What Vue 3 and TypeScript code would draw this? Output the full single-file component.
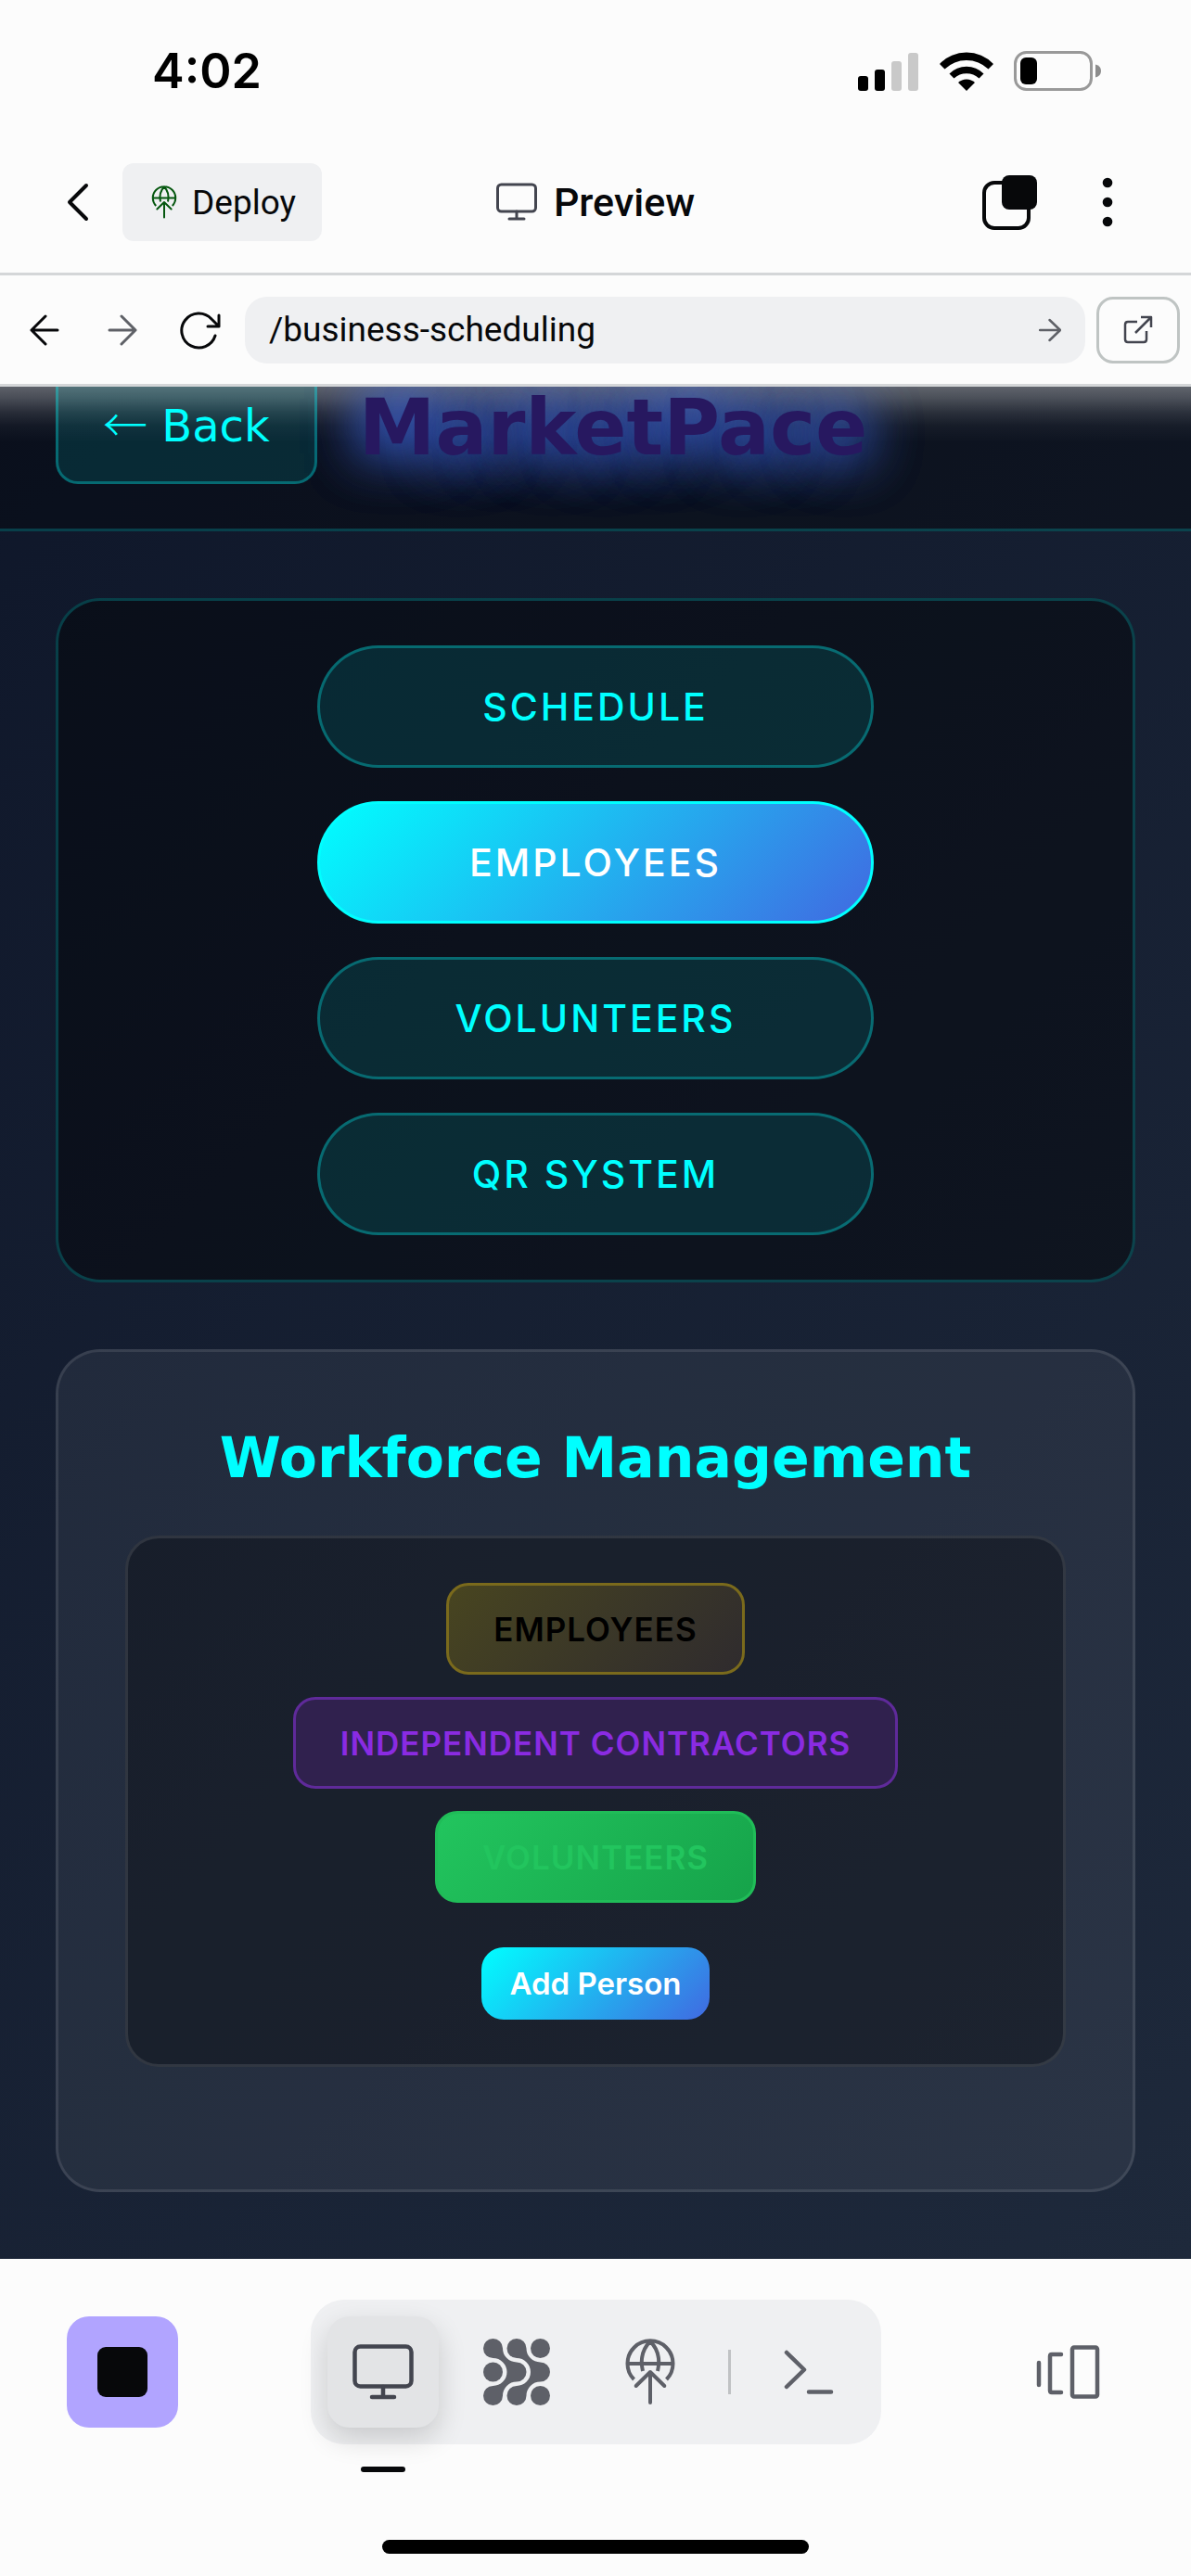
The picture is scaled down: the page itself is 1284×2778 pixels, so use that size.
<script setup lang="ts">
import { ref } from 'vue'

interface Tab {
  id: string
  label: string
}

const sections: Tab[] = [
  { id: 'schedule', label: 'SCHEDULE' },
  { id: 'employees', label: 'EMPLOYEES' },
  { id: 'volunteers', label: 'VOLUNTEERS' },
  { id: 'qr', label: 'QR SYSTEM' },
]
const groups: Tab[] = [
  { id: 'staff', label: 'EMPLOYEES' },
  { id: 'contractors', label: 'INDEPENDENT CONTRACTORS' },
  { id: 'helpers', label: 'VOLUNTEERS' },
]
const activeSection = ref('employees')
const path = ref('/business-scheduling')
</script>

<template>
  <div class="screen">
    <div class="status">
      <span class="time">4:02</span>
      <div class="indicators">
        <svg width="66" height="42" viewBox="0 0 66 42">
          <rect x="0" y="26" width="11" height="16" rx="3" />
          <rect x="18" y="19" width="11" height="23" rx="3" />
          <rect x="36" y="10" width="11" height="32" rx="3" fill="#c9c9c9" />
          <rect x="54" y="1" width="11" height="41" rx="3" fill="#c9c9c9" />
        </svg>
        <svg width="58" height="42" viewBox="0 0 58 42">
          <path d="M0 13A40 40 0 0 1 58 13L52.500 18.500A34 34 0 0 0 5.500 18.500Z" />
          <path d="M10.500 23.500A26 26 0 0 1 47.500 23.500L42.500 28.500A20 20 0 0 0 15.500 28.500Z" />
          <path d="M20 33A13 13 0 0 1 38 33L29 42Z" />
        </svg>
        <svg width="96" height="44" viewBox="0 0 96 44">
          <rect x="1.500" y="1.500" width="82" height="40" rx="12" fill="none" stroke="#999" stroke-width="3" />
          <rect x="7" y="7" width="18" height="29" rx="6" />
          <path d="M88 14.500Q94 16 94 21.500T88 28.500Z" fill="#8c8c8c" />
        </svg>
      </div>
    </div>

    <header class="nav">
      <div class="nav-left">
        <button class="chevron" aria-label="Go back">
          <svg width="24" height="42" viewBox="0 0 24 42"><path d="M21 3L3 21L21 39" fill="none" stroke="#07080a" stroke-width="4" stroke-linecap="round" stroke-linejoin="round" /></svg>
        </button>
        <button class="deploy">
          <svg class="line" width="36" height="36" viewBox="0 0 72 72" stroke="#05570f">
            <path d="M18.500 44A24.500 24.500 0 1 1 53.500 44M11.500 27H60.500M28 35C25 22 28 11 36 3C44 11 47 22 44 35" />
            <path d="M20.700 51L36 36L51.300 51M36 36V69" stroke-linecap="round" stroke-linejoin="round" />
          </svg>
          Deploy
        </button>
      </div>
      <h1 class="title">
        <svg width="44" height="42" viewBox="0 0 44 42" fill="none" stroke="#43454f" stroke-width="3">
          <rect x="1.500" y="2" width="41" height="29" rx="4" /><path d="M22 31V38M14 39H30" stroke-linecap="round" />
        </svg>
        Preview
      </h1>
      <div class="nav-right">
        <button aria-label="Tabs">
          <svg width="60" height="60" viewBox="0 0 60 60">
            <rect x="3" y="9" width="48" height="49" rx="11" fill="none" stroke="#07080a" stroke-width="4" />
            <rect x="22" y="1" width="38" height="37" rx="8" fill="#07080a" />
          </svg>
        </button>
        <button aria-label="More">
          <svg width="12" height="54" viewBox="0 0 12 54" fill="#07080a"><circle cx="6" cy="6" r="5.300" /><circle cx="6" cy="27" r="5.300" /><circle cx="6" cy="48" r="5.300" /></svg>
        </button>
      </div>
    </header>

    <form class="address" @submit.prevent>
      <button type="button" class="step" aria-label="Previous page">
        <svg width="32" height="34" viewBox="0 0 32 34" fill="none" stroke="#07080a" stroke-width="3" stroke-linecap="round" stroke-linejoin="round"><path d="M30 17H2M17 2L2 17L17 32" /></svg>
      </button>
      <button type="button" class="step" aria-label="Next page">
        <svg width="32" height="34" viewBox="0 0 32 34" fill="none" stroke="#5f6167" stroke-width="3" stroke-linecap="round" stroke-linejoin="round"><path d="M2 17H30M15 2L30 17L15 32" /></svg>
      </button>
      <button type="button" class="step" aria-label="Reload">
        <svg width="44" height="42" viewBox="0 0 44 42" fill="none" stroke="#07080a" stroke-width="3" stroke-linecap="round" stroke-linejoin="round"><path d="M38 27A18.500 18.500 0 1 1 34 9L42 17M42 5V17H30" /></svg>
      </button>
      <div class="field">
        <input v-model="path" type="text" aria-label="Page path" />
        <button type="submit" aria-label="Open path">
          <svg width="24" height="26" viewBox="0 0 24 26" fill="none" stroke="#5f6167" stroke-width="2.500" stroke-linecap="round" stroke-linejoin="round"><path d="M1 13H23M11.500 2L23 13L11.500 24" /></svg>
        </button>
      </div>
      <button type="button" class="external" aria-label="Open in new tab">
        <svg width="32" height="32" viewBox="0 0 32 32" fill="none" stroke="#43454f" stroke-width="2.500" stroke-linejoin="round"><path d="M15 7H5Q2 7 2 10V26Q2 29 5 29H22Q25 29 25 26V17M13 19L30 2M19 2H30V13" /></svg>
      </button>
    </form>

    <main class="page">
      <div class="brandbar">
        <button class="back"><span class="arrow">←</span> Back</button>
        <span class="brand">MarketPace</span>
      </div>

      <nav class="card sections">
        <button
          v-for="s in sections"
          :key="s.id"
          class="pill"
          :class="{ active: s.id === activeSection }"
          @click="activeSection = s.id"
        >{{ s.label }}</button>
      </nav>

      <section class="card workforce">
        <h2>Workforce Management</h2>
        <div class="panel">
          <div class="groups">
            <button v-for="g in groups" :key="g.id" class="group" :class="g.id">{{ g.label }}</button>
          </div>
          <button class="add">Add Person</button>
        </div>
      </section>
    </main>

    <footer class="dock">
      <div class="dock-row">
        <button class="stop" aria-label="Stop"><span></span></button>
        <div class="tools">
          <button class="tool current" aria-label="Preview">
            <svg width="66" height="62" viewBox="0 0 66 62" fill="none" stroke="#43454f" stroke-width="4.500">
              <rect x="2.500" y="3.500" width="61" height="43" rx="6" /><path d="M33 47V57M21 58H45" stroke-linecap="round" />
            </svg>
          </button>
          <button class="tool" aria-label="Agent">
            <svg width="72" height="72" viewBox="0 0 72 72" fill="#5e6068">
              <path d="M10.500 0A10.500 10.500 0 0 1 21 10.500A15 15 0 0 0 36 25.500A10.500 10.500 0 0 1 36 46.500A15 15 0 0 0 21 61.500A10.500 10.500 0 1 1 10.500 51A15 15 0 0 0 10.500 21A10.500 10.500 0 1 1 10.500 0Z" />
              <path transform="translate(25.5 0)" d="M10.500 0A10.500 10.500 0 0 1 21 10.500A15 15 0 0 0 36 25.500A10.500 10.500 0 0 1 36 46.500A15 15 0 0 0 21 61.500A10.500 10.500 0 1 1 10.500 51A15 15 0 0 0 10.500 21A10.500 10.500 0 1 1 10.500 0Z" />
              <circle cx="10.500" cy="36" r="10.500" /><circle cx="61.500" cy="10.500" r="10.500" /><circle cx="61.500" cy="61.500" r="10.500" />
            </svg>
          </button>
          <button class="tool" aria-label="Deployments">
            <svg class="line" width="72" height="72" viewBox="0 0 72 72" stroke="#5e6068">
              <path d="M18.500 44A24.500 24.500 0 1 1 53.500 44M11.500 27H60.500M28 35C25 22 28 11 36 3C44 11 47 22 44 35" />
              <path d="M20.700 51L36 36L51.300 51M36 36V69" stroke-linecap="round" stroke-linejoin="round" />
            </svg>
          </button>
          <span class="divider"></span>
          <button class="tool" aria-label="Console">
            <svg width="54" height="50" viewBox="0 0 54 50" fill="none" stroke="#5e6068" stroke-width="4.500" stroke-linecap="round" stroke-linejoin="round"><path d="M3 4L22 22.500L3 41M27 46.500H51" /></svg>
          </button>
        </div>
        <button class="tool" aria-label="Switch tab">
          <svg width="70" height="60" viewBox="0 0 70 60" fill="none" stroke="#5e6068" stroke-width="4.500" stroke-linecap="round" stroke-linejoin="round"><path d="M3 20V44M27 11H17Q15 11 15 13V50Q15 52 17 52H27" /><rect x="39" y="3.500" width="27" height="53" rx="2" /></svg>
        </button>
      </div>
      <div class="home"></div>
    </footer>
  </div>
</template>

<style>
body {
  margin: 0;
}
</style>

<style scoped>
* {
  box-sizing: border-box;
}
.screen {
  min-height: 100vh;
  display: flex;
  flex-direction: column;
  background: #fcfcfc;
  color: #07080a;
  font-family: Roboto, "Open Sans", sans-serif;
}
button {
  margin: 0;
  padding: 0;
  border: 0;
  background: none;
  color: inherit;
  font: inherit;
  cursor: pointer;
}
svg {
  display: block;
  flex: none;
}
.line {
  fill: none;
  stroke-width: 4;
}
.status {
  height: 142px;
  padding: 12px 95px 0 164px;
  display: flex;
  align-items: center;
  justify-content: space-between;
}
.time {
  color: #000;
  font: 600 52px/64px Inter, sans-serif;
}
.indicators {
  display: flex;
  align-items: center;
  gap: 22px;
}
.nav {
  height: 155px;
  padding: 0 60px 0 36px;
  border-bottom: 3px solid #d4d6d8;
  display: grid;
  grid-template-columns: 1fr auto 1fr;
  align-items: center;
}
.nav-left,
.nav-right,
.title {
  display: flex;
  align-items: center;
}
.nav-left {
  margin-right: 24px;
}
.chevron {
  width: 96px;
  height: 84px;
  display: flex;
  align-items: center;
  justify-content: center;
}
.deploy {
  height: 84px;
  padding: 0 28px 0 27px;
  border-radius: 12px;
  background: #eff0f2;
  display: flex;
  align-items: center;
  gap: 12px;
  font-size: 37px;
}
.title {
  margin: 0 0 0 24px;
  gap: 18px;
  font-size: 43px;
  font-weight: 500;
}
.nav-right {
  justify-content: flex-end;
  gap: 46px;
}
.nav-right button {
  width: 60px;
  height: 60px;
  display: flex;
  align-items: center;
  justify-content: center;
}
.address {
  position: relative;
  z-index: 1;
  height: 120px;
  padding: 0 12px 0 6px;
  border-bottom: 3px solid #d4d6d8;
  background: #fcfcfc;
  display: flex;
  align-items: center;
}
.step {
  width: 84px;
  height: 72px;
  display: flex;
  align-items: center;
  justify-content: center;
}
.field {
  flex: 1;
  min-width: 0;
  height: 72px;
  margin: 0 12px 0 6px;
  padding: 0 26px;
  border-radius: 24px;
  background: #eff0f2;
  display: flex;
  align-items: center;
}
.field input {
  flex: 1;
  min-width: 0;
  padding: 0;
  border: 0;
  outline: 0;
  background: none;
  color: inherit;
  font: inherit;
  font-size: 37px;
}
.external {
  width: 90px;
  height: 72px;
  border: 3px solid #bfc4c3;
  border-radius: 18px;
  display: flex;
  align-items: center;
  justify-content: center;
}
.page {
  flex: 1;
  padding-bottom: 69px;
  background: linear-gradient(135deg, #0f172a, #1e293b);
}
.brandbar {
  height: 156px;
  padding: 0 60px;
  border-bottom: 3px solid rgba(0, 255, 255, 0.2);
  background:
    linear-gradient(rgba(255, 255, 255, 0.34), rgba(255, 255, 255, 0.26) 12px, rgba(255, 255, 255, 0.12) 28px, rgba(255, 255, 255, 0.04) 42px, transparent 60px) no-repeat,
    rgba(0, 0, 0, 0.32);
  display: flex;
  align-items: flex-start;
  gap: 45px;
}
.back {
  height: 105px;
  padding: 0 48px 18px;
  border: 3px solid rgba(0, 255, 255, 0.3);
  border-top: 0;
  border-radius: 0 0 24px 24px;
  background: rgba(0, 255, 255, 0.11);
  color: #00ffff;
  font: 48px/56px "DejaVu Sans", sans-serif;
  white-space: nowrap;
}
.arrow {
  font-family: "Noto Sans CJK JP", sans-serif;
  font-weight: 300;
  line-height: 1;
}
.brand {
  color: #271860;
  font: 700 83px/90px "DejaVu Sans", sans-serif;
  text-shadow: 0 0 60px #4169e1, 0 0 60px #4169e1;
}
.card {
  margin: 72px 60px 0;
  border-radius: 48px;
  display: flex;
  flex-direction: column;
  align-items: center;
}
.sections {
  padding: 48px;
  gap: 36px;
  border: 3px solid rgba(0, 255, 255, 0.2);
  background: rgba(0, 0, 0, 0.4);
}
.pill {
  width: 600px;
  max-width: 100%;
  height: 132px;
  border: 3px solid rgba(0, 255, 255, 0.3);
  border-radius: 66px;
  background: rgba(0, 255, 255, 0.11);
  color: #00ffff;
  font: 500 41px/50px Inter, sans-serif;
  letter-spacing: 3px;
}
.pill.active {
  border-color: #00ffff;
  background: linear-gradient(135deg, #00ffff, #4169e1);
  color: #fff;
}
.workforce {
  padding: 72px 72px 132px;
  border: 3px solid rgba(255, 255, 255, 0.1);
  background: rgba(255, 255, 255, 0.06);
}
h2 {
  margin: 0 0 42px;
  color: #00ffff;
  font: 700 60px/84px "DejaVu Sans", sans-serif;
}
.panel {
  width: 100%;
  padding: 48px;
  border: 3px solid rgba(255, 255, 255, 0.1);
  border-radius: 36px;
  background: rgba(0, 0, 0, 0.3);
  display: flex;
  flex-direction: column;
  align-items: center;
  gap: 48px;
}
.groups {
  display: flex;
  flex-direction: column;
  align-items: center;
  gap: 24px;
}
.group {
  height: 99px;
  padding: 0 48px;
  border: 3px solid;
  border-radius: 24px;
  font: 600 35px/42px Inter, sans-serif;
  letter-spacing: 1px;
}
.staff {
  border-color: #7a6a1c;
  background: linear-gradient(135deg, #484520, #2f2b2e);
  color: #000;
}
.contractors {
  border-color: #5f2a9a;
  background: #30214e;
  color: #8a2be2;
}
.helpers {
  border-color: #20bc58;
  background: linear-gradient(135deg, #22c55e, #16a34a);
  color: #22c55e;
}
.add {
  height: 78px;
  padding: 0 30px;
  border-radius: 24px;
  background: linear-gradient(135deg, #00ffff, #4169e1);
  color: #fff;
  font: 600 33px/40px Inter, sans-serif;
}
.dock {
  padding: 44px 72px 24px;
}
.dock-row {
  display: flex;
  align-items: center;
  justify-content: space-between;
}
.stop {
  width: 120px;
  height: 120px;
  border-radius: 24px;
  background: #b1a4ff;
  display: flex;
  align-items: center;
  justify-content: center;
}
.stop span {
  width: 54px;
  height: 54px;
  border-radius: 9px;
  background: #07080a;
}
.tools {
  padding: 18px;
  border-radius: 36px;
  background: #eff0f2;
  display: flex;
  align-items: center;
  gap: 24px;
}
.tool {
  width: 120px;
  height: 120px;
  border-radius: 24px;
  display: flex;
  align-items: center;
  justify-content: center;
}
.current {
  position: relative;
  background: #e3e4e6;
  box-shadow: 0 12px 30px rgba(0, 0, 0, 0.16);
}
.current::after {
  content: "";
  position: absolute;
  bottom: -48px;
  left: 36px;
  width: 48px;
  height: 6px;
  border-radius: 3px;
  background: #07080a;
}
.divider {
  width: 3px;
  height: 48px;
  background: #c0c2c4;
}
.home {
  width: 460px;
  height: 15px;
  margin: 103px auto 0;
  border-radius: 8px;
  background: #000;
}
</style>
